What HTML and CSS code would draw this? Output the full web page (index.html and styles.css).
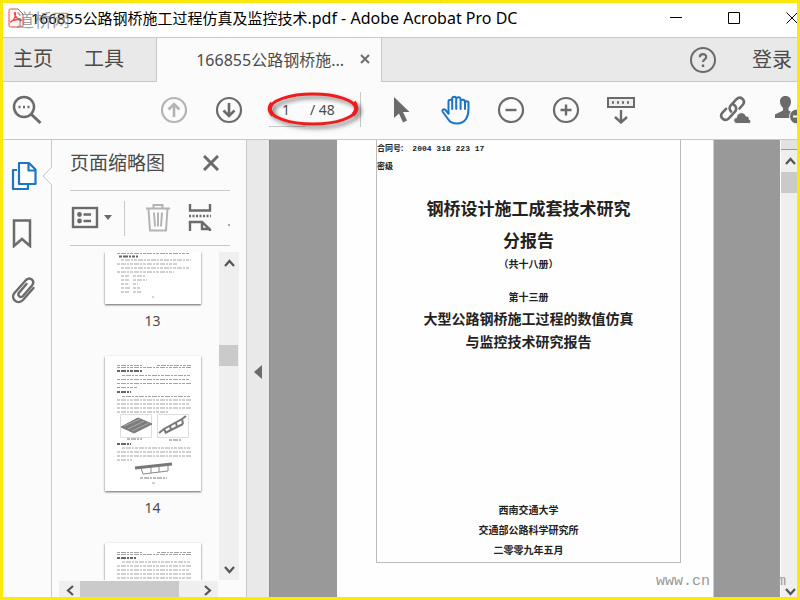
FILE: index.html
```
<!DOCTYPE html>
<html lang="zh-CN">
<head>
    <meta charset="UTF-8">
    <meta name="viewport" content="width=device-width, initial-scale=1.0">
    <title>166855公路钢桥施工过程仿真及监控技术.pdf - Adobe Acrobat Pro DC</title>
    <link rel="stylesheet" href="styles.css">
</head>
<body>
<div class="window">

    <header class="titlebar">
        <svg class="pdf-icon" width="16" height="20" viewBox="0 0 16 20" fill="none" stroke="#f04848">
            <path d="M2.5 1H10l5 5v11.500a1.500 1.500 0 0 1-1.500 1.500h-11A1.500 1.500 0 0 1 1 17.500v-15A1.500 1.500 0 0 1 2.500 1z" fill="#fff4f4"/>
            <path d="M3 14c3-2 4.500-5 4.500-8.500 0-1.500-1.500-1-1 .5 1 3 3 5 5.500 6.500 1.500.5 2-1 0-1.200-3-.2-5 .4-8 1.700-1.400.6-1.600 1.300-1 1z" stroke-width="1.300"/>
        </svg>
        <h1>166855公路钢桥施工过程仿真及监控技术<span>.pdf - Adobe Acrobat Pro DC</span></h1>
        <span class="site-mark">道桥网</span>
        <div class="window-buttons">
            <button aria-label="最小化"><svg width="12" height="12" stroke="#000"><path d="M0 5.500h12"/></svg></button>
            <button aria-label="最大化"><svg width="12" height="12" fill="none" stroke="#000"><path d="M.5.5h11v11H.5z"/></svg></button>
            <button aria-label="关闭"><svg width="12" height="12" stroke="#000"><path d="M.5.500l11 11M11.500.500l-11 11"/></svg></button>
        </div>
    </header>

    <nav class="tabs">
        <div class="tabs-left">
            <a href="#">主页</a>
            <a href="#">工具</a>
        </div>
        <div class="tab-active">
            <span>166855公路钢桥施...</span>
            <button aria-label="关闭标签"><svg width="10" height="10" stroke="#6e6e6e" stroke-width="2"><path d="M1 1l8 8M9 1l-8 8"/></svg></button>
        </div>
        <div class="tabs-right">
            <button aria-label="帮助">
                <svg width="28" height="28" viewBox="0 0 28 28" fill="none" stroke="#6b6b6b" stroke-width="2">
                    <circle cx="14" cy="14" r="12"/>
                    <path d="M10.800 11.300c0-4.200 6.600-4 6.400-.2-.1 2.300-3.200 2.300-3.200 5" stroke-width="2.200"/>
                    <path d="M14 18.500v2.500" stroke-width="2.400"/>
                </svg>
            </button>
            <a href="#">登录</a>
        </div>
    </nav>

    <div class="toolbar">
        <button class="search" aria-label="查找">
            <svg width="30" height="30" viewBox="0 0 30 30" fill="none" stroke="#6b6b6b" stroke-width="2.500">
                <circle cx="12" cy="12" r="10"/>
                <path d="M19.500 19.500l9 8.500" stroke-width="3"/>
                <path d="M6.500 12h2M11 12h2M15.500 12h2"/>
            </svg>
        </button>
        <button aria-label="上一页">
            <svg width="28" height="28" viewBox="0 0 28 28" fill="none" stroke="#b4b4b4" stroke-width="2.200">
                <circle cx="14" cy="14" r="12"/>
                <path d="M14 21V8M8.500 13.500L14 8l5.500 5.500" stroke-width="2.600"/>
            </svg>
        </button>
        <button aria-label="下一页">
            <svg width="28" height="28" viewBox="0 0 28 28" fill="none" stroke="#6b6b6b" stroke-width="2.200">
                <circle cx="14" cy="14" r="12"/>
                <path d="M14 7v13M8.500 14.500L14 20l5.500-5.500" stroke-width="2.600"/>
            </svg>
        </button>
        <div class="page-nav">
            <input type="text" value="1" aria-label="页码">
            <span>/ 48</span>
            <svg class="red-ring" width="100" height="42" viewBox="0 0 100 42" fill="none">
                <ellipse cx="48" cy="21" rx="43" ry="15" stroke="#ee1c1c" stroke-width="3"/>
                <path d="M7 15q-5 6 1 12M89 14q5 7-1 13" stroke="#ee1c1c" stroke-width="4"/>
            </svg>
        </div>
        <div class="tools">
            <button aria-label="选择">
                <svg width="28" height="28" viewBox="0 0 28 28" fill="#6b6b6b">
                    <path d="M7 1v21l5-4.500 4 9 4-2-4-8.500h6.500z"/>
                </svg>
            </button>
            <button aria-label="手形">
                <svg width="30" height="30" viewBox="0 0 30 30" fill="none" stroke="#1b74c8" stroke-width="2" stroke-linejoin="round" stroke-linecap="round">
                    <path d="M7.500 18.500L4.500 15c-1.700-1.600-3.800 0-2.700 2L7 24c3.500 6 14 6 18 0 2-3 2.500-6 2.500-10V8c0-2.300-3.500-2.300-3.500 0v6"/>
                    <path d="M7.500 18.500V6.500c0-2.400 3.700-2.400 3.700 0V14M11.200 6.500v-3c0-2.400 4-2.400 4 0V14M15.200 4c.5-2.500 4.400-2.300 4.400.5V14M19.600 6c.8-1.900 4.400-1.500 4.400 1v2"/>
                </svg>
            </button>
            <button aria-label="缩小">
                <svg width="28" height="28" viewBox="0 0 28 28" fill="none" stroke="#6b6b6b" stroke-width="2.200">
                    <circle cx="14" cy="14" r="12"/>
                    <path d="M8.500 14h11" stroke-width="2.400"/>
                </svg>
            </button>
            <button aria-label="放大">
                <svg width="28" height="28" viewBox="0 0 28 28" fill="none" stroke="#6b6b6b" stroke-width="2.200">
                    <circle cx="14" cy="14" r="12"/>
                    <path d="M8.500 14h11M14 8.500v11" stroke-width="2.400"/>
                </svg>
            </button>
            <button aria-label="工具栏">
                <svg width="28" height="28" viewBox="0 0 28 28" fill="none" stroke="#6b6b6b" stroke-width="2">
                    <rect x="1" y="2" width="26" height="9" fill="#eee"/>
                    <path d="M5 6.500h18" stroke-width="2.500" stroke-dasharray="2 3"/>
                    <path d="M14 14v12M8 21l6 5.500 6-5.500" stroke-width="2.400"/>
                </svg>
            </button>
        </div>
        <div class="share">
            <button aria-label="共享链接">
                <svg width="32" height="30" viewBox="0 0 32 30" fill="none" stroke="#6b6b6b" stroke-width="2.600" stroke-linecap="round">
                    <path d="M12 16.500c-2-2-1.800-4.500 0-6.300l5.500-6c4-3.800 9.500 1 6.500 5.300l-3.500 4"/>
                    <path d="M14.500 9.500c3 1.500 3.500 5 1.300 7.300l-6 6.500c-4 4-10-1-6.500-5.500l3.700-4"/>
                    <path d="M18 28.500c-4.500-.2-4-6-.5-5.800 0-5.500 8-7 9.500-1.700 3 0 3.500 2 3 3.300 3 1 2 4.200 0 4.200z" fill="#6b6b6b" stroke="#fbfbfb" stroke-width="1"/>
                </svg>
            </button>
            <button class="invite" aria-label="邀请">
                <svg width="32" height="30" viewBox="0 0 32 30" fill="#6b6b6b">
                    <path d="M11.500 1c4 0 5.500 2.500 5.500 5.500 0 3-1 4.500-2.500 6.500v2.500l8 4V23H1v-3.500l8-4V13C7.500 11 6 9.500 6 6.500 6 3.500 7.500 1 11.500 1z"/>
                    <circle cx="23" cy="21.500" r="7.500" stroke="#fbfbfb"/>
                    <path d="M19 20.500h8v2h-8z" fill="#fff"/>
                </svg>
            </button>
        </div>
    </div>

    <div class="workspace">
        <aside class="rail">
            <button aria-label="页面缩略图">
                <svg width="26" height="30" viewBox="0 0 26 30" fill="none" stroke="#1b74c8" stroke-width="2.200" stroke-linejoin="round">
                    <path d="M6 9H2v19h15v-4"/>
                    <path d="M8 2h10l6.500 6.500V23H8z" fill="#fff"/>
                    <path d="M17.500 2v7.500h7"/>
                </svg>
            </button>
            <button aria-label="书签">
                <svg width="26" height="30" viewBox="0 0 26 30" fill="none" stroke="#6b6b6b" stroke-width="2.500">
                    <path d="M3 2.500h16V28l-8-7-8 7z"/>
                </svg>
            </button>
            <button aria-label="附件">
                <svg width="26" height="30" viewBox="0 0 26 30" fill="none" stroke="#6b6b6b" stroke-width="2.400" stroke-linecap="round">
                    <path d="M22.500 13L12 25c-5.500 5.500-13-1.500-8.500-7L15 5c4.500-4 9.500 1 6 5.500l-9 10.500c-2.500 2.500-6-.5-4-3.300l7.500-8.700"/>
                </svg>
            </button>
            <svg class="rail-pointer" width="10" height="18" viewBox="0 0 10 18" fill="#fbfbfb" stroke="#c8c8c8"><path d="M10 0L1 9l9 9"/></svg>
        </aside>

        <section class="panel">
            <div class="panel-title">
                <h2>页面缩略图</h2>
                <button aria-label="关闭面板"><svg width="16" height="16" stroke="#6b6b6b" stroke-width="3"><path d="M1 1l14 14M15 1L1 15"/></svg></button>
            </div>
            <div class="panel-tools">
                <button class="options" aria-label="选项">
                    <svg width="42" height="24" viewBox="0 0 42 24" fill="none" stroke="#6b6b6b" stroke-width="2.400">
                        <rect x="3" y="2" width="24" height="19"/>
                        <path d="M13.500 8.500H21M13.500 15H21"/>
                        <circle cx="9.500" cy="8.500" r="1.200"/><circle cx="9.500" cy="15" r="1.200"/>
                        <path d="M34 9h8l-4 5z" fill="#6b6b6b" stroke="none"/>
                    </svg>
                </button>
                <button class="delete" aria-label="删除页面">
                    <svg width="26" height="30" viewBox="0 0 26 30" fill="none" stroke="#b4b4b4" stroke-width="2">
                        <path d="M1 5.500h24M8.500 5V2h9v3M3.500 6l1.500 21.500h16L22.500 6M9 9.500l1 14M13 9.500v14M17 9.500l-1 14"/>
                    </svg>
                </button>
                <button class="split" aria-label="拆分页面">
                    <svg width="24" height="30" viewBox="0 0 24 30" fill="none" stroke="#6b6b6b" stroke-width="2.400">
                        <path d="M2 1v6.500h20V1"/>
                        <path d="M1 13h22" stroke-dasharray="2 1.500"/>
                        <path d="M2 28v-9h12l8 7.500V28M14 19v7h7"/>
                    </svg>
                </button>
                <i class="more"></i>
            </div>
            <div class="thumb-area">
                <div class="thumbs">
                    <figure>
                        <svg class="cut" viewBox="0 0 96 52" stroke="#a2a2a2" stroke-dasharray="3 1 5 1 2 1">
                            <path d="M12 1.500h72M16 8h70M12 12h60M16 16h68M12 20h57" />
                            <path d="M14 4.500h19" stroke="#666" stroke-width="2"/>
                            <path d="M16 24h8M28 24h12M16 28h8M28 28h14M16 32h7M28 32h5M16 36h9M28 36h7M16 40h8M28 40h8M47 45h2"/>
                        </svg>
                        <figcaption>13</figcaption>
                    </figure>
                    <figure>
                        <svg class="full" viewBox="0 0 96 135" fill="none" stroke="#a2a2a2" stroke-dasharray="3 1 5 1 2 1">
                            <path d="M12 9.500h26M52 9.500h34M12 11.500h74"/>
                            <path d="M12 15h25M12 36h14M12 88h14" stroke="#666" stroke-width="2"/>
                            <path d="M17 19.500h69M12 23.500h72M12 27.500h74M12 31.500h20"/>
                            <path d="M17 40.500h69M12 44h74M12 48h72M12 52h74M12 56h52"/>
                            <path d="M17 92h69M12 96h74M12 100h74M12 104h15"/>
                            <g stroke-dasharray="none">
                                <path d="M15.500 58.500h31v23h-31zM52.500 58.500h31v23h-31z" stroke="#ddd"/>
                                <path d="M16 71l17-9 14 6-18 9z" fill="#7d7d7d" stroke="#777"/>
                                <path d="M19 70l16-7M23 73l16-8M27 75l17-8" stroke="#aaa"/>
                                <path d="M54 77l5-4 18-10 4-3M60 77l18-9" stroke="#777" stroke-width="2"/>
                                <path d="M59 73l2 4M65 70l1 4M71 67l1 4M77 63l1 5" stroke="#777" stroke-width="2"/>
                                <path d="M30 112l37-4" stroke="#777" stroke-width="3"/>
                                <path d="M36 112l2 6 25-3V109M46 111v6M54 110v6" stroke="#888"/>
                            </g>
                            <path d="M22 83h15M64 84h13M35 122h27" stroke="#777"/>
                            <path d="M47 127h3"/>
                        </svg>
                        <figcaption>14</figcaption>
                    </figure>
                    <figure>
                        <svg class="full" viewBox="0 0 96 135" fill="none" stroke="#a2a2a2" stroke-dasharray="3 1 5 1 2 1">
                            <path d="M12 9.500h26M52 9.500h34M12 11.500h74"/>
                            <path d="M12 15h19" stroke="#666" stroke-width="2"/>
                            <path d="M17 19h69M12 23h74M12 27h72M12 31h74M12 35h74M12 39h74"/>
                        </svg>
                    </figure>
                </div>
                <div class="vscroll">
                    <button aria-label="向上滚动"><svg width="11" height="8" fill="none" stroke="#555" stroke-width="2.200"><path d="M1 7l4.500-5L10 7"/></svg></button>
                    <i class="thumb-v"></i>
                    <button aria-label="向下滚动"><svg width="11" height="8" fill="none" stroke="#555" stroke-width="2.200"><path d="M1 1l4.500 5L10 1"/></svg></button>
                </div>
            </div>
            <div class="hscroll">
                <button aria-label="向左滚动"><svg width="8" height="11" fill="none" stroke="#555" stroke-width="2.200"><path d="M7 1L2 5.500 7 10"/></svg></button>
                <i class="thumb-h"></i>
                <button aria-label="向右滚动"><svg width="8" height="11" fill="none" stroke="#555" stroke-width="2.200"><path d="M1 1l5 4.500L1 10"/></svg></button>
            </div>
        </section>

        <button class="splitter" aria-label="折叠面板"><svg width="8" height="14" fill="#6b6b6b"><path d="M8 0v14L0 7z"/></svg></button>

        <main class="document">
            <article class="sheet">
                <div class="frame">
                    <p class="meta">合同号: <span>2004 318 223 17</span></p>
                    <p class="meta">密级</p>
                    <h3>钢桥设计施工成套技术研究</h3>
                    <h3>分报告</h3>
                    <p class="small">（共十八册）</p>
                    <p class="small volume">第十三册</p>
                    <h4>大型公路钢桥施工过程的数值仿真</h4>
                    <h4>与监控技术研究报告</h4>
                    <footer>
                        <p>西南交通大学</p>
                        <p>交通部公路科学研究所</p>
                        <p>二零零九年五月</p>
                    </footer>
                </div>
            </article>
            <div class="doc-scroll">
                <i class="split-box"></i>
                <button aria-label="向上滚动"><svg width="11" height="8" fill="none" stroke="#555" stroke-width="2.200"><path d="M1 7l4.500-5L10 7"/></svg></button>
                <i class="thumb-d"></i>
                <button class="down" aria-label="向下滚动"><svg width="11" height="8" fill="none" stroke="#555" stroke-width="2.200"><path d="M1 1l4.500 5L10 1"/></svg></button>
            </div>
            <div class="watermark"><span>www.cn</span><span>m</span></div>
        </main>
    </div>
</div>
</body>
</html>
```

FILE: styles.css
```
* {
    box-sizing: border-box;
}
body {
    margin: 0;
    font-family: "Noto Sans", "Noto Sans CJK SC", sans-serif;
    color: #4b4b4b;
}
h1, h2, h3, h4, p, figure {
    margin: 0;
    font-weight: normal;
}
a {
    color: #4b4b4b;
    text-decoration: none;
}
button {
    display: flex;
    align-items: center;
    justify-content: center;
    flex-shrink: 0;
    padding: 0;
    border: none;
    background: none;
    cursor: pointer;
}
svg {
    display: block;
    flex-shrink: 0;
}
.window {
    display: flex;
    flex-direction: column;
    height: 100vh;
    border: 3px solid #fce80c;
    background: #fbfbfb;
    overflow: hidden;
}

/* title bar */
.titlebar {
    position: relative;
    display: flex;
    align-items: center;
    height: 34px;
    flex-shrink: 0;
    padding: 0 0 4px 5px;
    background: #fff;
    overflow: hidden;
}
.titlebar h1 {
    margin-left: 7px;
    font-size: 15px;
    line-height: 30px;
    color: #000;
    white-space: nowrap;
}
.titlebar h1 span {
    font-size: 16px;
}
.site-mark {
    position: absolute;
    left: 13px;
    top: 4px;
    font-size: 18px;
    line-height: 26px;
    color: rgba(120, 120, 120, 0.7);
}
.window-buttons {
    display: flex;
    margin-left: auto;
    margin-right: -24px;
    height: 30px;
}
.window-buttons button {
    width: 58px;
}

/* tabs */
.tabs {
    display: flex;
    height: 45px;
    flex-shrink: 0;
    border-top: 1px solid #c8c8c8;
    background: #e9e9e9;
}
.tabs-left, .tabs-right {
    display: flex;
    align-items: center;
    border-bottom: 1px solid #c8c8c8;
    font-size: 20px;
    line-height: 40px;
}
.tabs-left {
    width: 154px;
    gap: 31px;
    padding: 0 0 2px 10px;
    border-right: 1px solid #c8c8c8;
}
.tab-active {
    display: flex;
    align-items: center;
    justify-content: flex-end;
    gap: 16px;
    width: 225px;
    padding: 0 11px 2px 0;
    border-right: 1px solid #c8c8c8;
    background: #fbfbfb;
    font-size: 16px;
    white-space: nowrap;
}
.tabs-right {
    flex: 1;
    justify-content: flex-end;
    gap: 35px;
    padding-right: 5px;
}

/* toolbar */
.toolbar {
    display: flex;
    align-items: center;
    height: 58px;
    flex-shrink: 0;
    padding-bottom: 2px;
    border-bottom: 1px solid #c8c8c8;
    overflow: hidden;
}
.toolbar button {
    width: 55px;
    height: 54px;
}
.toolbar .search {
    width: 48px;
    margin-right: 95px;
}
.page-nav {
    position: relative;
    display: flex;
    align-items: center;
    width: 105px;
    height: 35px;
    padding-left: 13px;
    border-right: 1px solid #c8c8c8;
    font-size: 14px;
}
.page-nav input {
    width: 36px;
    height: 35px;
    margin-right: 5px;
    padding: 0 0 0 13px;
    border: none;
    border-bottom: 1px solid #c8c8c8;
    background: none;
    font: inherit;
    color: inherit;
}
.red-ring {
    position: absolute;
    left: 9px;
    top: -4px;
    filter: drop-shadow(3px 3px 2px rgba(0, 0, 0, 0.5));
    pointer-events: none;
}
.tools {
    display: flex;
    margin-left: 12px;
}
.share {
    display: flex;
    margin-left: auto;
}
.share .invite {
    width: 35px;
    justify-content: flex-start;
    padding-left: 12px;
    overflow: hidden;
}

/* workspace */
.workspace {
    display: flex;
    flex: 1;
    min-height: 0;
}
.rail {
    position: relative;
    display: flex;
    flex-direction: column;
    gap: 27px;
    width: 49px;
    flex-shrink: 0;
    padding: 21px 0 0 8px;
    border-right: 1px solid #c8c8c8;
}
.rail button {
    width: 26px;
    height: 30px;
}
.rail-pointer {
    position: absolute;
    right: -1px;
    top: 27px;
}
.panel {
    display: flex;
    flex-direction: column;
    width: 195px;
    flex-shrink: 0;
    border-right: 1px solid #c8c8c8;
}
.panel-title, .panel-tools {
    display: flex;
    align-items: center;
    flex-shrink: 0;
    margin: 0 16px 0 18px;
    border-bottom: 1px solid #c8c8c8;
}
.panel-title {
    justify-content: space-between;
    height: 51px;
    padding: 0 11px 4px 0;
}
.panel-title h2 {
    font-size: 19px;
    line-height: 46px;
}
.panel-tools {
    height: 55px;
}
.options {
    height: 35px;
    padding-right: 12px;
    border-right: 1px solid #c8c8c8;
}
.delete {
    margin-left: 20px;
}
.split {
    margin-left: 17px;
}
.more {
    width: 2px;
    height: 2px;
    margin: 14px 0 0 auto;
    background: #aaa;
}
.thumb-area {
    display: flex;
    flex: 1;
    min-height: 0;
    margin: 6px 7px 1px 0;
}
.thumbs {
    display: flex;
    flex-direction: column;
    align-items: center;
    flex: 1;
    padding-left: 34px;
    overflow: hidden;
}
.thumbs figure {
    width: 96px;
    flex-shrink: 0;
}
.thumbs svg {
    width: 96px;
    background: #fff;
    box-shadow: 0 1px 2px rgba(0, 0, 0, 0.6);
}
.cut {
    height: 52px;
}
.full {
    height: 135px;
}
.thumbs figcaption {
    height: 52px;
    font-size: 14px;
    line-height: 34px;
    text-align: center;
}
.vscroll, .doc-scroll {
    display: flex;
    flex-direction: column;
    background: #efefef;
}
.vscroll {
    width: 20px;
}
.vscroll button {
    height: 21px;
}
.thumb-v {
    width: 19px;
    height: 21px;
    margin: 72px 0 auto;
    background: #cacaca;
}
.hscroll {
    display: flex;
    height: 16px;
    flex-shrink: 0;
    margin: 0 28px 0 7px;
    background: #efefef;
    overflow: hidden;
}
.hscroll button {
    width: 21px;
    height: 19px;
}
.thumb-h {
    width: 99px;
    margin-right: auto;
    background: #cacaca;
}
.splitter {
    width: 23px;
    padding-top: 6px;
    border-right: 1px solid #8c8c8c;
    background: #e9e9e9;
}

/* document */
.document {
    position: relative;
    display: flex;
    flex: 1;
    justify-content: flex-end;
    background: #999;
    overflow: hidden;
}
.sheet {
    display: flex;
    flex: 1;
    margin: 0 66px 0 67px;
    padding: 0 32px 34px 39px;
    border-right: 1px solid #ccc;
    background: #fefefe;
}
.frame {
    display: flex;
    flex-direction: column;
    flex: 1;
    border: 1px solid #bbb;
    border-top: none;
    color: #222;
    text-align: center;
    white-space: nowrap;
}
.frame .meta {
    height: 18px;
    font-size: 8px;
    font-weight: bold;
    line-height: 16px;
    text-align: left;
}
.meta span {
    margin-left: 7px;
    font-family: "Liberation Mono", monospace;
}
.frame h3 {
    font-size: 17px;
    font-weight: bold;
    line-height: 32px;
}
.meta + h3 {
    margin-top: 17px;
}
.frame .small, .frame footer p {
    font-size: 10px;
    font-weight: bold;
}
.frame .small {
    line-height: 14px;
}
.frame .volume {
    margin: 19px 0 3px;
}
.frame h4 {
    font-size: 14px;
    font-weight: bold;
    line-height: 23px;
}
.frame footer {
    margin-top: auto;
    line-height: 20px;
    padding-bottom: 2px;
}
.doc-scroll {
    width: 17px;
    border-left: 1px solid #fff;
}
.split-box {
    height: 10px;
    border-bottom: 1px solid #999;
    background: #e2e2e2;
}
.doc-scroll button {
    height: 22px;
    padding-left: 3px;
}
.thumb-d {
    height: 21px;
    background: #cacaca;
}
.doc-scroll .down {
    height: 10px;
    margin-top: auto;
}
.watermark {
    position: absolute;
    right: 11px;
    bottom: 3px;
    display: flex;
    justify-content: space-between;
    width: 130px;
    font-family: "Liberation Mono", monospace;
    font-size: 15px;
    line-height: 24px;
    color: #999;
}
```
